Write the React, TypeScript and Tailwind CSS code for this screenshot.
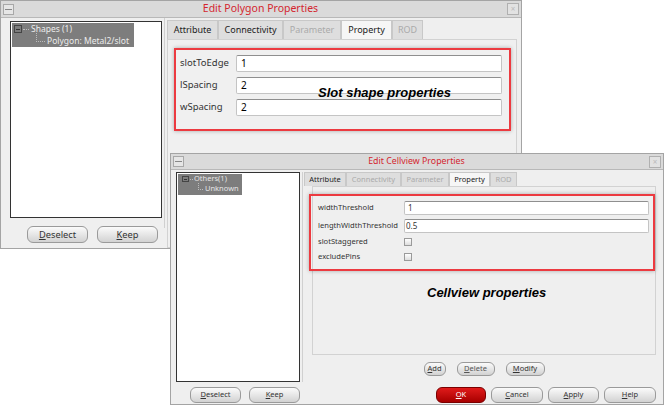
import React from "react";

const ui = { fontFamily: '"Noto Sans", "DejaVu Sans", sans-serif' };
const note = { fontFamily: '"Liberation Sans", Arial, sans-serif' };

function Btn({ label, cls, red }: { label: string; cls: string; red?: boolean }) {
  return (
    <div
      className={`flex items-center justify-center rounded-[6px] border ${
        red
          ? "border-[#7a0000] bg-gradient-to-b from-[#e01a1a] to-[#a80000] text-white"
          : "border-[#9a9a9a] bg-gradient-to-b from-[#fbfbfb] to-[#d2d2d2] text-[#333]"
      } ${cls}`}
    >
      <span>
        <span className="underline">{label[0]}</span>
        {label.slice(1)}
      </span>
    </div>
  );
}

function TitleBar({ title, cls, text }: { title: string; cls: string; text: string }) {
  return (
    <div className={`flex items-center bg-[#dadada] border-b border-[#b8b8b8] ${cls}`}>
      <div className="ml-[2px] h-[11px] w-[11px] border border-[#a8a8a8] bg-[#e6e6e6] flex items-center justify-center">
        <div className="h-px w-[7px] bg-[#888]" />
      </div>
      <div className={`flex-1 text-center text-[#d4262e] ${text}`}>{title}</div>
      <div className="mr-[2px] h-[12px] w-[12px] border border-[#b0b0b0] bg-[#e2e2e2] text-[8px] leading-[10px] text-center text-[#bbb]">
        ×
      </div>
    </div>
  );
}

function Tabs({ tabs, cls }: { tabs: { n: string; w: string; s: string }[]; cls: string }) {
  return (
    <div className={`flex ${cls}`}>
      {tabs.map((t) => (
        <div
          key={t.n}
          className={`flex items-center justify-center border border-b-0 border-[#c8c8c8] ${t.w} ${
            t.s === "on"
              ? "bg-[#f6f6f6] text-[#222]"
              : t.s === "off"
              ? "bg-[#dedede] text-[#aaa]"
              : "bg-[#dedede] text-[#222]"
          }`}
        >
          {t.n}
        </div>
      ))}
    </div>
  );
}

function Field({ value, cls }: { value: string; cls: string }) {
  return (
    <div className={`bg-white border border-[#c4c4c4] border-t-[#8f8f8f] rounded-[2px] flex items-center ${cls}`}>
      {value}
    </div>
  );
}

function Check() {
  return <div className="h-[8px] w-[8px] border border-[#9a9a9a] bg-gradient-to-b from-white to-[#ddd]" />;
}

export default function App() {
  const tabs1 = [
    { n: "Attribute", w: "w-[51px]", s: "" },
    { n: "Connectivity", w: "w-[65px]", s: "" },
    { n: "Parameter", w: "w-[58px]", s: "off" },
    { n: "Property", w: "w-[51px]", s: "on" },
    { n: "ROD", w: "w-[31px]", s: "off" },
  ];
  const tabs2 = [
    { n: "Attribute", w: "w-[42px]", s: "" },
    { n: "Connectivity", w: "w-[55px]", s: "off" },
    { n: "Parameter", w: "w-[48px]", s: "off" },
    { n: "Property", w: "w-[41px]", s: "on" },
    { n: "ROD", w: "w-[27px]", s: "off" },
  ];

  return (
    <div className="relative w-[665px] h-[406px] bg-white overflow-hidden" style={ui}>
      {/* polygon window */}
      <div className="absolute left-0 top-0 w-[522px] h-[249px] bg-[#efefef] border border-[#a4a4a4] flex flex-col">
        <TitleBar title="Edit Polygon Properties" cls="h-[17px]" text="text-[10.5px]" />
        <div className="flex flex-1">
          <div className="w-[161px] flex flex-col pl-[9px] pt-[3px]">
            <div className="w-[152px] h-[197px] bg-white border border-[#333] flex flex-col pt-px pl-px text-[8.5px]">
              <div className="w-[122px] h-[24px] bg-[#7d7d7d] text-[#ececec]">
                <div className="flex items-center h-[12px] pl-[2px]">
                  <div className="h-[8px] w-[8px] border border-[#444] flex items-center justify-center">
                    <div className="h-px w-[4px] bg-[#333]" />
                  </div>
                  <div className="ml-px w-[6px] border-t border-dotted border-[#bbb]" />
                  <span className="ml-[2px]">Shapes (1)</span>
                </div>
                <div className="flex items-center h-[12px] pl-[24px]">
                  <div className="w-[9px] h-[9px] -mt-[8px] border-l border-b border-dotted border-[#bbb]" />
                  <span className="ml-[2px]">Polygon: Metal2/slot</span>
                </div>
              </div>
            </div>
            <div className="flex gap-[9px] pl-[17px] mt-[8px] text-[9.3px]">
              <Btn label="Deselect" cls="w-[61px] h-[17px]" />
              <Btn label="Keep" cls="w-[61px] h-[17px]" />
            </div>
          </div>
          <div className="w-[5px] flex justify-center">
            <div className="w-px h-[210px] bg-[#d0d0d0]" />
          </div>
          <div className="flex flex-col pt-[2px] w-[350px]">
            <Tabs tabs={tabs1} cls="h-[19px] text-[9px]" />
            <div className="flex-1 border border-[#d2d2d2] bg-[#f0f0f0] pl-[6px] pt-[8px]">
              <div className="w-[337px] h-[83px] border-2 border-[#ec3a40] shadow-[0_0_4px_rgba(0,0,0,0.3)] flex flex-col gap-[5px] pt-[5px] pl-[4px] text-[9.5px]">
                {[
                  ["slotToEdge", "1"],
                  ["lSpacing", "2"],
                  ["wSpacing", "2"],
                ].map(([l, v]) => (
                  <div key={l} className="flex items-center">
                    <span className="w-[56px] text-[#333]">{l}</span>
                    <Field value={v} cls="w-[266px] h-[17px] pl-[4px] text-[10px]" />
                  </div>
                ))}
              </div>
            </div>
          </div>
        </div>
      </div>
      <div className="absolute left-[318px] top-[83px] text-[13px] font-bold italic text-black" style={note}>
        Slot shape properties
      </div>

      {/* cellview window */}
      <div className="absolute left-[170px] top-[153px] w-[494px] h-[252px] bg-[#efefef] border border-[#a4a4a4] flex flex-col">
        <TitleBar title="Edit Cellview Properties" cls="h-[16px]" text="text-[8.8px]" />
        <div className="flex pt-[2px] h-[213px]">
          <div className="w-[130px] pl-[5px]">
            <div className="w-[124px] h-[210px] bg-white border border-[#333] flex flex-col pt-px pl-px text-[7.5px]">
              <div className="w-[64px] h-[21px] bg-[#7d7d7d] text-[#e6e6e6]">
                <div className="flex items-center h-[10px] pl-[4px]">
                  <div className="h-[6px] w-[7px] border border-[#444] flex items-center justify-center">
                    <div className="h-px w-[3px] bg-[#333]" />
                  </div>
                  <div className="ml-px w-[3px] border-t border-dotted border-[#bbb]" />
                  <span className="ml-px">Others(1)</span>
                </div>
                <div className="flex items-center h-[10px] pl-[20px]">
                  <div className="w-[5px] h-[7px] -mt-[6px] border-l border-b border-dotted border-[#bbb]" />
                  <span className="ml-[2px]">Unknown</span>
                </div>
              </div>
            </div>
          </div>
          <div className="w-[3px] flex justify-center">
            <div className="w-px h-[210px] bg-[#d0d0d0]" />
          </div>
          <div className="flex flex-col w-[352px]">
            <Tabs tabs={tabs2} cls="h-[14px] text-[7.5px]" />
            <div className="ml-[8px] h-[169px] border border-[#d2d2d2] pt-[7px]">
              <div className="-ml-[4px] w-[346px] h-[77px] border-2 border-[#ec3a40] shadow-[0_0_4px_rgba(0,0,0,0.3)] flex flex-col pt-[5px] pl-[7px] text-[7.6px] text-[#333]">
                <div className="flex items-center h-[14px]">
                  <span className="w-[86px]">widthThreshold</span>
                  <Field value="1" cls="w-[245px] h-[14px] pl-[3px] text-[8px]" />
                </div>
                <div className="flex items-center h-[14px] mt-[4px]">
                  <span className="w-[86px]">lengthWidthThreshold</span>
                  <Field value="0.5" cls="w-[245px] h-[14px] pl-[1px] text-[8px]" />
                </div>
                <div className="flex items-center h-[12px] mt-[3px]">
                  <span className="w-[86px]">slotStaggered</span>
                  <Check />
                </div>
                <div className="flex items-center h-[12px] mt-[3px]">
                  <span className="w-[86px]">excludePins</span>
                  <Check />
                </div>
              </div>
            </div>
            <div className="ml-[8px] w-[344px] flex justify-center gap-[11px] mt-[7px] text-[7.5px]">
              <Btn label="Add" cls="w-[22px] h-[14px] rounded-[5px]" />
              <Btn label="Delete" cls="w-[38px] h-[14px] rounded-[5px] text-[#555]" />
              <Btn label="Modify" cls="w-[39px] h-[14px] rounded-[5px]" />
            </div>
          </div>
        </div>
        <div className="flex items-center mt-[4px] text-[7.5px]">
          <div className="flex gap-[8px] pl-[19px]">
            <Btn label="Deselect" cls="w-[51px] h-[16px]" />
            <Btn label="Keep" cls="w-[51px] h-[16px]" />
          </div>
          <div className="flex gap-[5px] ml-[136px]">
            <Btn label="OK" red cls="w-[50px] h-[16px]" />
            <Btn label="Cancel" cls="w-[52px] h-[16px]" />
            <Btn label="Apply" cls="w-[51px] h-[16px]" />
            <Btn label="Help" cls="w-[52px] h-[16px]" />
          </div>
        </div>
      </div>
      <div className="absolute left-[427px] top-[283px] text-[13px] font-bold italic text-black" style={note}>
        Cellview properties
      </div>
    </div>
  );
}
